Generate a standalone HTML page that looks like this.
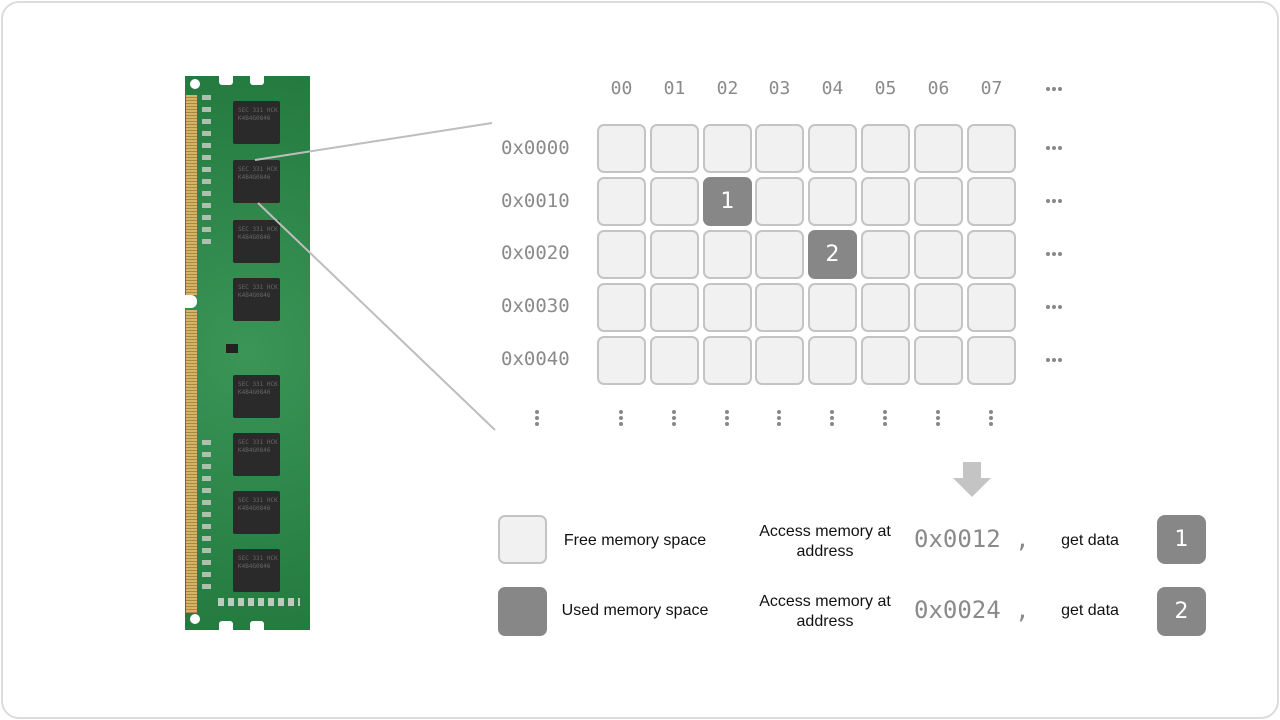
<!DOCTYPE html>
<html><head><style>
body{margin:0;width:1280px;height:720px;background:#fff;position:relative;overflow:hidden;font-family:"Liberation Sans",sans-serif}
.frame{position:absolute;left:1px;top:1px;width:1274px;height:714px;border:2px solid #dcdcdc;border-radius:18px}
.a{position:absolute}
.mono{font-family:"DejaVu Sans Mono","Liberation Mono",monospace;color:#8a8a8a}
.cell{position:absolute;width:45px;height:45px;background:#f1f1f1;border:2px solid #c4c4c4;border-radius:7px;box-sizing:content-box}
.used{background:#878787;border-color:#878787;color:#fff;font-size:22px;text-align:center;line-height:45px;font-family:"DejaVu Sans",sans-serif}
.cl{position:absolute;width:49px;text-align:center;font-size:18px;top:78px}
.rl{position:absolute;left:501px;font-size:19px}
.hd{position:absolute;left:1046px;width:18px;height:4px;display:flex;gap:2px}
.hd i{display:block;width:4px;height:4px;border-radius:2px;background:#888}
.vd{position:absolute;width:4px;top:410px}
.vd i{display:block;width:4px;height:4px;border-radius:2px;background:#888;margin-bottom:2px}
.t{position:absolute;font-size:16px;color:#111;text-align:center}
.chip{position:absolute;left:233px;width:47px;height:43px;background:#2a2a2a;border-radius:2px;color:#666;font-size:6px;font-family:"DejaVu Sans Mono",monospace;padding:6px 0 0 5px;box-sizing:border-box;line-height:8px}
</style></head><body>
<div class="frame"></div>

<div class="a" style="left:185px;top:76px;width:125px;height:554px;background:radial-gradient(circle at 50% 50%,#3a9557,#247a3f);"></div>
<div class="a" style="left:186px;top:95px;width:11px;height:200px;background:repeating-linear-gradient(#d9b363 0 2px,#a58a46 2px 3px)"></div>
<div class="a" style="left:186px;top:310px;width:11px;height:303px;background:repeating-linear-gradient(#d9b363 0 2px,#a58a46 2px 3px)"></div>
<div class="a" style="left:185px;top:295px;width:12px;height:13px;background:#fff;border-radius:0 6px 6px 0"></div>
<div class="a" style="left:219px;top:76px;width:14px;height:9px;background:#fff;border-radius:0 0 3px 3px"></div>
<div class="a" style="left:250px;top:76px;width:14px;height:9px;background:#fff;border-radius:0 0 3px 3px"></div>
<div class="a" style="left:219px;top:621px;width:14px;height:9px;background:#fff;border-radius:3px 3px 0 0"></div>
<div class="a" style="left:250px;top:621px;width:14px;height:9px;background:#fff;border-radius:3px 3px 0 0"></div>
<div class="a" style="left:190px;top:79px;width:10px;height:10px;background:#fff;border-radius:50%"></div>
<div class="a" style="left:190px;top:614px;width:10px;height:10px;background:#fff;border-radius:50%"></div>
<div class="a" style="left:202px;top:95px;width:9px;height:150px;background:repeating-linear-gradient(#aebfae 0 5px,transparent 5px 12px)"></div>
<div class="a" style="left:202px;top:440px;width:9px;height:150px;background:repeating-linear-gradient(#aebfae 0 5px,transparent 5px 12px)"></div>
<div class="a" style="left:218px;top:598px;width:82px;height:8px;background:repeating-linear-gradient(90deg,#c0cbc0 0 6px,transparent 6px 10px)"></div>
<div class="chip" style="top:101px">SEC 331 HCK<br>K4B4G0846</div>
<div class="chip" style="top:160px">SEC 331 HCK<br>K4B4G0846</div>
<div class="chip" style="top:220px">SEC 331 HCK<br>K4B4G0846</div>
<div class="chip" style="top:278px">SEC 331 HCK<br>K4B4G0846</div>
<div class="chip" style="top:375px">SEC 331 HCK<br>K4B4G0846</div>
<div class="chip" style="top:433px">SEC 331 HCK<br>K4B4G0846</div>
<div class="chip" style="top:491px">SEC 331 HCK<br>K4B4G0846</div>
<div class="chip" style="top:549px">SEC 331 HCK<br>K4B4G0846</div>
<div class="a" style="left:226px;top:344px;width:12px;height:9px;background:#222"></div>

<svg class="a" style="left:0;top:0" width="1280" height="720">
<line x1="255" y1="160" x2="492" y2="123" stroke="#bdbdbd" stroke-width="2"/>
<line x1="258" y1="203" x2="495" y2="430" stroke="#bdbdbd" stroke-width="2"/>
<polygon points="963,462 981,462 981,478 991,478 972,497 953,478 963,478" fill="#c4c4c4"/>
</svg>

<div class="cl mono" style="left:597px">00</div>
<div class="cl mono" style="left:650px">01</div>
<div class="cl mono" style="left:703px">02</div>
<div class="cl mono" style="left:755px">03</div>
<div class="cl mono" style="left:808px">04</div>
<div class="cl mono" style="left:861px">05</div>
<div class="cl mono" style="left:914px">06</div>
<div class="cl mono" style="left:967px">07</div>

<div class="rl mono" style="top:137px">0x0000</div>
<div class="rl mono" style="top:190px">0x0010</div>
<div class="rl mono" style="top:242px">0x0020</div>
<div class="rl mono" style="top:295px">0x0030</div>
<div class="rl mono" style="top:348px">0x0040</div>

<div id="grid"></div>
<script>
var xs=[597,650,703,755,808,861,914,967],ys=[124,177,230,283,336],h='';
for(var r=0;r<5;r++)for(var c=0;c<8;c++){
 var u=(r==1&&c==2)?'1':(r==2&&c==4)?'2':'';
 h+='<div class="cell'+(u?' used':'')+'" style="left:'+xs[c]+'px;top:'+ys[r]+'px">'+u+'</div>';}
document.getElementById('grid').innerHTML=h;
</script>

<div class="hd" style="top:87px"><i></i><i></i><i></i></div>
<div class="hd" style="top:146px"><i></i><i></i><i></i></div>
<div class="hd" style="top:199px"><i></i><i></i><i></i></div>
<div class="hd" style="top:252px"><i></i><i></i><i></i></div>
<div class="hd" style="top:305px"><i></i><i></i><i></i></div>
<div class="hd" style="top:358px"><i></i><i></i><i></i></div>

<div class="vd" style="left:535px"><i></i><i></i><i></i></div>
<div class="vd" style="left:619px"><i></i><i></i><i></i></div>
<div class="vd" style="left:672px"><i></i><i></i><i></i></div>
<div class="vd" style="left:725px"><i></i><i></i><i></i></div>
<div class="vd" style="left:777px"><i></i><i></i><i></i></div>
<div class="vd" style="left:830px"><i></i><i></i><i></i></div>
<div class="vd" style="left:883px"><i></i><i></i><i></i></div>
<div class="vd" style="left:936px"><i></i><i></i><i></i></div>
<div class="vd" style="left:989px"><i></i><i></i><i></i></div>

<div class="cell" style="left:498px;top:515px"></div>
<div class="cell" style="left:498px;top:587px;background:#878787;border-color:#878787"></div>
<div class="t" style="left:555px;top:532px;width:160px">Free memory space</div>
<div class="t" style="left:555px;top:602px;width:160px">Used memory space</div>
<div class="t" style="left:745px;top:522px;width:160px;line-height:20px">Access memory at<br>address</div>
<div class="t" style="left:745px;top:592px;width:160px;line-height:20px">Access memory at<br>address</div>
<div class="a mono" style="left:914px;top:525px;font-size:24px">0x0012 ,</div>
<div class="a mono" style="left:914px;top:596px;font-size:24px">0x0024 ,</div>
<div class="t" style="left:1050px;top:532px;width:80px">get data</div>
<div class="t" style="left:1050px;top:602px;width:80px">get data</div>
<div class="cell used" style="left:1157px;top:515px;border-radius:8px">1</div>
<div class="cell used" style="left:1157px;top:587px;border-radius:8px">2</div>
</body></html>
